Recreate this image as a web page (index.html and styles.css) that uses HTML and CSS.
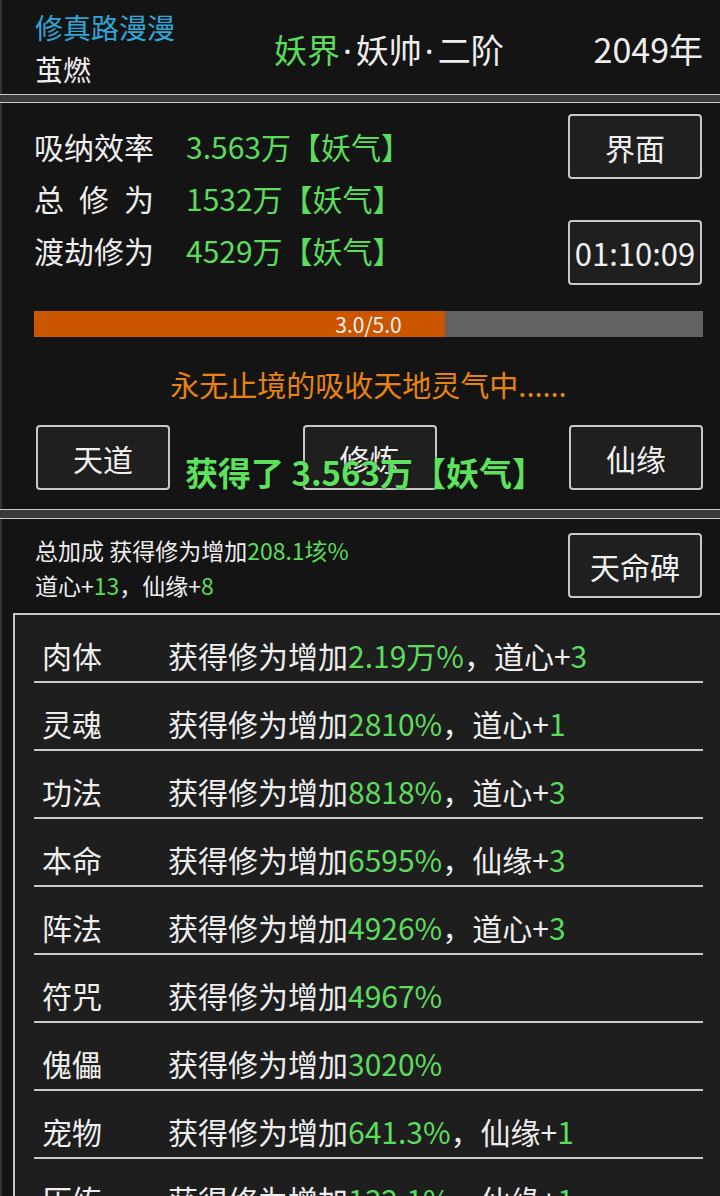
FILE: index.html
```html
<!DOCTYPE html>
<html lang="zh-CN">
  <head>
    <meta charset="UTF-8" />
    <meta name="viewport" content="width=device-width, initial-scale=1.0" />
    <title>修真路漫漫</title>
    <link rel="stylesheet" href="styles.css">
  </head>
  <body>
    <div class="panel header">
      <div class="titleCol">
        <div class="gameName">修真路漫漫</div>
        <div class="playerName">茧燃</div>
      </div>
      <div class="realm"><span class="green">妖界</span><span class="dot">·</span>妖帅<span class="dot">·</span>二阶</div>
      <div class="year">2049年</div>
    </div>

    <div class="panel cultivate">
      <div class="statsSection">
        <div class="stats">
          <div class="statRow"><span class="statLabel">吸纳效率</span><span class="green">3.563万【妖气】</span></div>
          <div class="statRow"><span class="statLabel spaced">总修为</span><span class="green">1532万【妖气】</span></div>
          <div class="statRow"><span class="statLabel">渡劫修为</span><span class="green">4529万【妖气】</span></div>
        </div>
        <div class="sideButtons">
          <button class="btn">界面</button>
          <button class="btn timer">01:10:09</button>
        </div>
      </div>

      <div class="progress">
        <div class="progressFill" style="width: 61.4%"></div>
        <span class="progressText">3.0/5.0</span>
      </div>

      <div class="statusMsg">永无止境的吸收天地灵气中......</div>

      <div class="actionRow">
        <button class="btn">天道</button>
        <button class="btn">修炼</button>
        <button class="btn">仙缘</button>
        <div class="gainPopup">获得了 3.563万【妖气】</div>
      </div>
    </div>

    <div class="panel bonus">
      <div class="bonusHead">
        <div class="bonusText">
          <div>总加成 获得修为增加<span class="green">208.1垓%</span></div>
          <div>道心+<span class="green">13</span>，仙缘+<span class="green">8</span></div>
        </div>
        <button class="btn">天命碑</button>
      </div>

      <div class="bonusList">
        <div class="bonusRow">
          <span class="bonusName">肉体</span>
          <span>获得修为增加<span class="green">2.19万%</span>，道心+<span class="green">3</span></span>
        </div>
        <div class="bonusRow">
          <span class="bonusName">灵魂</span>
          <span>获得修为增加<span class="green">2810%</span>，道心+<span class="green">1</span></span>
        </div>
        <div class="bonusRow">
          <span class="bonusName">功法</span>
          <span>获得修为增加<span class="green">8818%</span>，道心+<span class="green">3</span></span>
        </div>
        <div class="bonusRow">
          <span class="bonusName">本命</span>
          <span>获得修为增加<span class="green">6595%</span>，仙缘+<span class="green">3</span></span>
        </div>
        <div class="bonusRow">
          <span class="bonusName">阵法</span>
          <span>获得修为增加<span class="green">4926%</span>，道心+<span class="green">3</span></span>
        </div>
        <div class="bonusRow">
          <span class="bonusName">符咒</span>
          <span>获得修为增加<span class="green">4967%</span></span>
        </div>
        <div class="bonusRow">
          <span class="bonusName">傀儡</span>
          <span>获得修为增加<span class="green">3020%</span></span>
        </div>
        <div class="bonusRow">
          <span class="bonusName">宠物</span>
          <span>获得修为增加<span class="green">641.3%</span>，仙缘+<span class="green">1</span></span>
        </div>
        <div class="bonusRow">
          <span class="bonusName">历练</span>
          <span>获得修为增加<span class="green">132.1%</span>，仙缘+<span class="green">1</span></span>
        </div>
      </div>
    </div>
  </body>
</html>
```

FILE: styles.css
```css
* {
  box-sizing: border-box;
}
body {
  margin: 0;
  height: 1196px;
  overflow: hidden;
  background: #3a3a3a;
  color: #eeeeee;
  font-family: "Noto Sans CJK SC", "Noto Sans", sans-serif;
}
.green {
  color: #5cdc5c;
}
.panel {
  background: #141414;
  border-bottom: 1px solid #c8c8c8;
  box-shadow: inset 2px 0 #333333;
}

/* top bar */
.header {
  display: flex;
  align-items: flex-start;
  height: 95px;
  padding: 6px 17px 0 35px;
  margin-bottom: 7px;
}
.titleCol {
  width: 239px;
  line-height: 42px;
  font-size: 28px;
}
.gameName {
  color: #2ea6d8;
}
.realm {
  margin-top: 22px;
  line-height: 42px;
  font-size: 33px;
}
.dot {
  font-family: "Noto Sans", sans-serif;
  margin: 0 4px 0 3px;
}
.year {
  margin-top: 22px;
  margin-left: auto;
  line-height: 42px;
  font-size: 34px;
}

/* cultivation panel */
.cultivate {
  border-top: 1px solid #c8c8c8;
  padding: 11px 17px 19px 34px;
  margin-bottom: 8px;
}
.statsSection {
  display: flex;
  justify-content: space-between;
}
.stats {
  margin-top: 6px;
  font-size: 30px;
  line-height: 52px;
}
.statLabel {
  display: inline-block;
  width: 152px;
}
.statLabel.spaced {
  letter-spacing: 15px;
}
.sideButtons {
  display: flex;
  flex-direction: column;
  gap: 41px;
  margin-right: 1px;
}
.btn {
  width: 134px;
  height: 65px;
  padding: 0;
  background: #1f1f1f;
  border: 2px solid #c8c8c8;
  border-radius: 4px;
  color: #f0f0f0;
  font-family: "Noto Sans CJK SC", "Noto Sans", sans-serif;
  font-size: 30px;
}
.btn.timer {
  font-size: 31px;
}
.progress {
  position: relative;
  display: flex;
  height: 26px;
  margin-top: 26px;
  background: #626262;
}
.progressFill {
  background: #cc5500;
}
.progressText {
  position: absolute;
  left: 0;
  right: 0;
  top: 0;
  text-align: center;
  line-height: 26px;
  font-size: 21px;
  color: #f4f4f4;
}
.statusMsg {
  margin-top: 27px;
  line-height: 40px;
  text-align: center;
  font-size: 29px;
  color: #e8840e;
}
.actionRow {
  position: relative;
  display: flex;
  justify-content: space-between;
  margin-top: 21px;
  padding-left: 2px;
}
.gainPopup {
  position: absolute;
  left: -34px;
  right: -17px;
  top: 28px;
  padding-left: 10px;
  line-height: 38px;
  text-align: center;
  font-size: 33px;
  font-weight: bold;
  color: #5ce25c;
  text-shadow: 0 0 2px #0a0a0a;
}

/* bonus panel */
.bonus {
  border-top: 1px solid #c8c8c8;
  border-bottom: none;
  padding-top: 14px;
  height: 700px;
}
.bonusHead {
  display: flex;
  justify-content: space-between;
  padding: 0 18px 0 35px;
}
.bonusText {
  font-size: 23px;
  line-height: 35px;
}
.bonusList {
  margin: 10px -4px 0 13px;
  background: #1e1e1e;
  border: 2px solid #c8c8c8;
  height: 600px;
}
.bonusRow {
  display: flex;
  margin: 0 19px 0 19px;
  padding: 23px 0 9px 8px;
  line-height: 34px;
  font-size: 30px;
  border-bottom: 2px solid #c8c8c8;
}
.bonusName {
  width: 126px;
  flex-shrink: 0;
}
```
